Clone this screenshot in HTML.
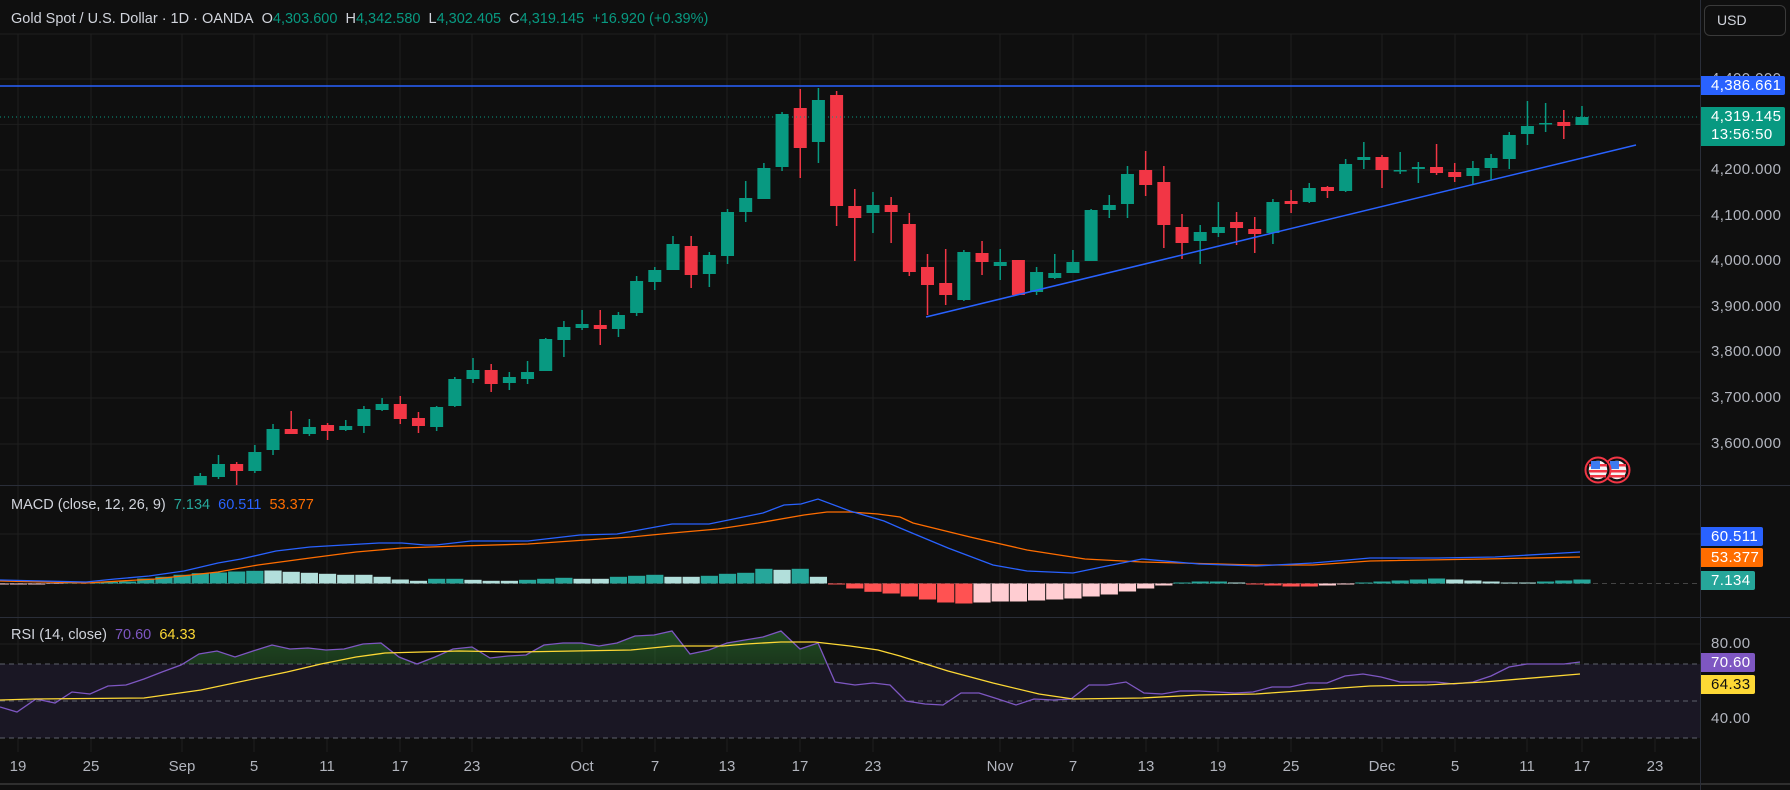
<!DOCTYPE html>
<html><head><meta charset="utf-8"><style>
html,body{margin:0;padding:0;background:#0f0f0f;width:1790px;height:790px;overflow:hidden;font-family:"Liberation Sans",sans-serif}
.t{position:absolute;white-space:nowrap}
.ax{position:absolute;left:1711px;color:#b2b5be;font-size:15px;letter-spacing:0.4px}
.lb{position:absolute;left:1701px;color:#fff;font-size:15px;padding-left:10px;box-sizing:border-box;border-radius:0 2px 2px 0;letter-spacing:0.4px}
.tm{position:absolute;top:758px;color:#b2b5be;font-size:15px;transform:translateX(-50%)}
</style></head><body>
<svg id="s" width="1790" height="790" style="position:absolute;left:0;top:0">
<defs>
<clipPath id="pp"><rect x="0" y="34" width="1700" height="451"/></clipPath>
<clipPath id="ob"><rect x="0" y="600" width="1700" height="64"/></clipPath>
<linearGradient id="gg" x1="0" y1="0" x2="0" y2="1"><stop offset="0" stop-color="#2e7d32" stop-opacity="0.55"/><stop offset="1" stop-color="#2e7d32" stop-opacity="0.08"/></linearGradient>
</defs>
<g id="grid" stroke="#1f1f1f" stroke-width="1"></g>
<rect x="0" y="664" width="1700" height="74" fill="#1a1724"/>
<g stroke="#5d606b" stroke-dasharray="5,4" stroke-width="1">
<line x1="0" y1="664" x2="1700" y2="664"/><line x1="0" y1="701" x2="1700" y2="701"/><line x1="0" y1="738" x2="1700" y2="738"/>
<line x1="0" y1="583.5" x2="1700" y2="583.5" stroke="#444"/>
</g>
<g id="hist"></g>
<g id="cand" clip-path="url(#pp)"></g>
<line x1="0" y1="86" x2="1700" y2="86" stroke="#2962ff" stroke-width="1.5"/>
<line x1="0" y1="117" x2="1700" y2="117" stroke="#089981" stroke-dasharray="1,3"/>
<line x1="926" y1="317" x2="1636" y2="145" stroke="#2962ff" stroke-width="1.5"/>
<g id="lines" fill="none" stroke-width="1.3"></g>
<g stroke="#2a2e39" stroke-width="1">
<line x1="0" y1="485.5" x2="1790" y2="485.5"/><line x1="0" y1="617.5" x2="1790" y2="617.5"/>
<line x1="0" y1="784" x2="1790" y2="784" stroke="#2f2f2f" stroke-width="2"/>
<line x1="1700.5" y1="0" x2="1700.5" y2="790"/>
</g>
<g>
<circle cx="1617" cy="470" r="12.5" fill="#0f0f0f" stroke="#f23645" stroke-width="2"/>
<circle cx="1617" cy="470" r="10" fill="#f5f5f5" stroke="#111" stroke-width="1.5"/>
<rect x="1608" y="464" width="18" height="2.5" fill="#f23645"/><rect x="1608" y="470" width="18" height="2.5" fill="#f23645"/><rect x="1609" y="475" width="16" height="2.5" fill="#f23645"/>
<rect x="1610" y="461" width="9" height="8" fill="#3d7bf0"/>
<circle cx="1598" cy="470" r="12.5" fill="#0f0f0f" stroke="#f23645" stroke-width="2"/>
<circle cx="1598" cy="470" r="10" fill="#f5f5f5" stroke="#111" stroke-width="1.5"/>
<rect x="1589" y="464" width="18" height="2.5" fill="#f23645"/><rect x="1589" y="470" width="18" height="2.5" fill="#f23645"/><rect x="1590" y="475" width="16" height="2.5" fill="#f23645"/>
<rect x="1591" y="461" width="9" height="8" fill="#3d7bf0"/>
</g>
</svg>
<div class="t" style="left:11px;top:11px;font-size:14.5px;color:#d1d4dc">Gold Spot / U.S. Dollar · 1D · OANDA&nbsp; O<span style="color:#089981">4,303.600</span>&nbsp; H<span style="color:#089981">4,342.580</span>&nbsp; L<span style="color:#089981">4,302.405</span>&nbsp; C<span style="color:#089981">4,319.145</span>&nbsp; <span style="color:#089981">+16.920 (+0.39%)</span></div>
<div class="t" style="left:1704px;top:5px;width:82px;height:31px;border:1px solid #3a3a3a;border-radius:6px;box-sizing:border-box;color:#d1d4dc;font-size:14px;line-height:29px;padding-left:12px">USD</div>
<div class="ax" style="top:70px">4,400.000</div>
<div class="ax" style="top:161px">4,200.000</div>
<div class="ax" style="top:207px">4,100.000</div>
<div class="ax" style="top:252px">4,000.000</div>
<div class="ax" style="top:298px">3,900.000</div>
<div class="ax" style="top:343px">3,800.000</div>
<div class="ax" style="top:389px">3,700.000</div>
<div class="ax" style="top:435px">3,600.000</div>
<div class="lb" style="top:76px;height:19px;width:84px;background:#2962ff;line-height:19px">4,386.661</div>
<div class="lb" style="top:107px;height:39px;width:84px;background:#089981;line-height:18px;padding-top:1px">4,319.145<br>13:56:50</div>
<div class="t" style="left:11px;top:497px;font-size:14.5px;color:#d1d4dc">MACD (close, 12, 26, 9)&nbsp; <span style="color:#26a69a">7.134</span>&nbsp; <span style="color:#2962ff">60.511</span>&nbsp; <span style="color:#ff6d00">53.377</span></div>
<div class="lb" style="top:527px;height:19px;width:62px;background:#2962ff;line-height:19px">60.511</div>
<div class="lb" style="top:548px;height:19px;width:62px;background:#ff6d00;line-height:19px">53.377</div>
<div class="lb" style="top:571px;height:19px;width:54px;background:#26a69a;line-height:19px">7.134</div>
<div class="t" style="left:11px;top:627px;font-size:14.5px;color:#d1d4dc">RSI (14, close)&nbsp; <span style="color:#7e57c2">70.60</span>&nbsp; <span style="color:#fdd835">64.33</span></div>
<div class="ax" style="top:635px">80.00</div>
<div class="ax" style="top:710px">40.00</div>
<div class="lb" style="top:653px;height:19px;width:54px;background:#7e57c2;line-height:19px">70.60</div>
<div class="lb" style="top:675px;height:19px;width:54px;background:#fdd835;color:#111;line-height:19px">64.33</div>
<div class="tm" style="left:18px">19</div><div class="tm" style="left:91px">25</div><div class="tm" style="left:182px">Sep</div>
<div class="tm" style="left:254px">5</div><div class="tm" style="left:327px">11</div><div class="tm" style="left:400px">17</div>
<div class="tm" style="left:472px">23</div><div class="tm" style="left:582px">Oct</div><div class="tm" style="left:655px">7</div>
<div class="tm" style="left:727px">13</div><div class="tm" style="left:800px">17</div><div class="tm" style="left:873px">23</div>
<div class="tm" style="left:1000px">Nov</div><div class="tm" style="left:1073px">7</div><div class="tm" style="left:1146px">13</div>
<div class="tm" style="left:1218px">19</div><div class="tm" style="left:1291px">25</div><div class="tm" style="left:1382px">Dec</div>
<div class="tm" style="left:1455px">5</div><div class="tm" style="left:1527px">11</div><div class="tm" style="left:1582px">17</div>
<div class="tm" style="left:1655px">23</div>
<script>
var NS="http://www.w3.org/2000/svg";
function el(p,t,a){var e=document.createElementNS(NS,t);for(var k in a)e.setAttribute(k,a[k]);p.appendChild(e);return e;}
var g=document.getElementById('grid');
[79,124.4,170,215.6,261,307,352,398,444,534,644,719].forEach(function(y){el(g,'line',{x1:0,y1:y,x2:1700,y2:y});});
[18,91,182,254,327,400,472,582,655,727,800,873,1000,1073,1146,1218,1291,1382,1455,1527,1582,1655].forEach(function(x){el(g,'line',{x1:x,y1:34,x2:x,y2:752});});
el(g,'line',{x1:0,y1:34,x2:1700,y2:34});
var C=[[476,485,473,487,1],[464,477,455,479,1],[464,471,462,487,0],[452,471,445,473,1],[429,450,424,455,1],[429,434,411,434,0],[427,434,419,436,1],[425,431,423,440,0],[426,430,420,431,1],[409,426,406,433,1],[404,410,398,411,1],[404,419,396,424,0],[418,426,412,433,0],[407,427,406,431,1],[379,406,377,407,1],[370,379,358,383,1],[370,384,364,392,0],[377,383,372,390,1],[372,379,361,384,1],[339,371,338,371,1],[327,340,321,357,1],[324,328,310,330,1],[325,329,310,345,0],
[315,329,312,337,1],[281,313,276,316,1],[270,282,267,290,1],[244,270,236,270,1],[246,275,236,288,0],[255,274,252,287,1],[212,256,209,264,1],[198,212,181,222,1],[168,199,163,199,1],[114,167,112,171,1],[108,148,89,178,0],[100,142,88,163,1],[95,206,91,226,0],[206,218,189,261,0],[205,213,192,233,1],[205,212,197,243,0],
[224,272,213,276,0],[267,285,254,315,0],[283,295,249,305,0],[252,300,250,301,1],[253,262,241,275,0],[262,266,249,280,1],[260,295,260,295,0],[272,292,267,295,1],[273,278,254,279,1],[262,273,250,273,1],[210,261,209,261,1],[205,210,195,218,1],[174,204,166,218,1],[170,185,151,196,0],[182,225,166,248,0],[227,243,214,259,0],[232,241,225,264,1],[227,233,202,237,1],[222,228,212,245,0],[229,234,217,253,0],[202,233,199,244,1],[201,204,190,213,0],
[188,202,183,203,1],[187,191,186,198,0],[164,191,159,192,1],[157,160,142,169,1],[157,170,155,188,0],[170,171.5,152,174,1],[167,169,162,183,1],[167,173,144,175,0],[172,177,163,182,0],[168,176,161,185,1],[158,168,154,180,1],[135,159,132,169,1],[126,134,101,145,1],[123,124.5,103,132,1],[122,126,110,139,0],[117,125,106,125,1]];
var cg=document.getElementById('cand');
C.forEach(function(c,i){var x=200.3+18.18*i;var col=c[4]?'#089981':'#f23645';
el(cg,'rect',{x:x-0.75,y:c[2],width:1.5,height:c[3]-c[2],fill:col});
el(cg,'rect',{x:x-6.5,y:c[0],width:13,height:Math.max(1.5,c[1]-c[0]),fill:col});});
var H=[[-1,'P'],[-1,'P'],[-1,'P'],[-0.5,'P'],[0.5,'T'],[1,'T'],[1.5,'T'],[2,'T'],[5,'T'],[6.7,'T'],[8.7,'T'],[10.3,'T'],[11,'T'],[12,'T'],[12.7,'T'],[13,'L'],[11.7,'L'],[10.7,'L'],[9.7,'L'],[8.7,'L'],[8.7,'L'],[6.7,'L'],[4,'L'],[2.7,'L'],[4.7,'T'],[4.7,'T'],[3.7,'L'],[2.7,'L'],[2.7,'L'],[3.7,'T'],[4.7,'T'],[5.7,'T'],[4.7,'L'],[4.7,'L'],[6.7,'T'],[7.7,'T'],[8.7,'T'],[6.7,'L'],[6.7,'L'],[7.7,'T'],[9.7,'T'],[10.7,'T'],[14.7,'T'],[13.7,'L'],[14.7,'T'],[6.7,'L'],[-1,'R'],[-5,'R'],[-8.3,'R'],[-10,'R'],[-13,'R'],[-16,'R'],[-19,'R'],[-20,'R'],[-19,'P'],[-18,'P'],[-18,'P'],[-17,'P'],[-16,'P'],[-15,'P'],[-13,'P'],[-11,'P'],[-8,'P'],[-5,'P'],[-2,'P'],[1,'T'],[2,'T'],[2,'T'],[1,'L'],[-1,'R'],[-2,'R'],[-3,'R'],[-3,'R'],[-2,'P'],[-1,'P'],[1,'T'],[2,'T'],[3,'T'],[4,'T'],[5,'T'],[4,'L'],[3,'L'],[2,'L'],[1,'L'],[1,'L'],[2,'T'],[3,'T'],[4,'T']];
var CM={T:'#26a69a',L:'#b2dfdb',R:'#ff5252',P:'#ffcdd2'};
var hg=document.getElementById('hist');
H.forEach(function(h,k){var x=200.3+18.18*(k-11);var v=h[0];
el(hg,'rect',{x:x-8.6,y:v>0?583.5-v:583.5,width:17.2,height:Math.abs(v),fill:CM[h[1]]});});
var lg=document.getElementById('lines');
function pl(pts,col){el(lg,'polyline',{points:pts,stroke:col});}
var purple="0,707 17,712 36,699 55,703 72,692 90,694 108,686 126,685 144,679 162,672 181,665 199,654 217,651 235,657 253,651 272,645 290,649 308,648 326,650 344,649 363,644 381,643 399,657 417,664 435,657 453,649 472,647 490,658 508,656 526,655 544,645 563,643 581,643 599,646 617,643 635,636 654,635 672,631 690,654 709,650 727,643 745,640 763,637 781,631 800,649 818,643 835,682 855,685 873,683 890,685 906,701 925,704 943,705 961,693 979,693 998,699 1016,705 1034,699 1053,700 1071,699 1089,685 1107,685 1126,682 1144,693 1162,694 1180,691 1199,691 1217,692 1235,693 1253,692 1272,687 1290,687 1308,683 1327,683 1345,676 1363,674 1381,677 1400,682 1418,682 1436,682 1454,684 1473,682 1491,676 1509,667 1527,664 1546,664 1564,664 1580,662";
el(lg,'polygon',{points:"0,664 "+purple+" 1580,664",fill:"url(#gg)",stroke:"none","clip-path":"url(#ob)"});
pl(purple,'#7e57c2');
pl("0,700 34,699 144,698 201,690 258,678 287,672 321,664 356,657 385,653 459,651 517,652 574,651 631,650 672,646 723,646 746,644 781,642 815,642 850,646 878,650 900,656 948,671 993,683 1039,694 1073,699 1142,698 1199,695 1256,694 1313,690 1370,686 1427,685 1484,682 1580,674",'#fdd835');
pl("0,581 86,583 155,579 218,572 258,565 310,558 356,552 402,548 459,546 528,544 586,540 631,537 672,533 718,529 758,523 804,515 827,512 850,512 878,514 900,517 913,523 970,537 1027,550 1085,559 1142,562 1256,565 1313,565 1370,561 1484,559 1580,557",'#ff6d00');
pl("0,580 86,582 115,579 149,576 184,571 218,563 241,559 276,551 310,547 344,545 379,543 402,543 425,545 436,545 471,541 528,541 580,535 617,534 672,524 709,524 763,513 784,505 801,504 818,499 850,511 884,521 900,528 948,548 993,565 1027,571 1073,573 1107,566 1142,559 1199,564 1256,566 1313,563 1370,558 1438,558 1495,557 1580,552",'#2962ff');
</script>
</body></html>
